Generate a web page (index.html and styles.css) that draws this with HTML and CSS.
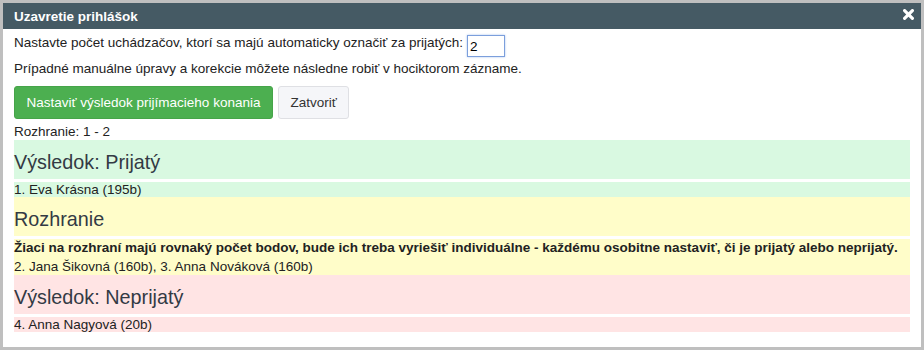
FILE: index.html
```html
<!DOCTYPE html>
<html lang="sk">
<head>
    <meta charset="UTF-8">
    <title>Uzavretie prihlášok</title>
    <link rel="stylesheet" href="styles.css">
</head>
<body>
    <div class="dialog">
        <div class="dialog-title">
            <span>Uzavretie prihlášok</span>
            <button class="close" title="Zavrieť">
                <svg width="11" height="11" viewBox="0 0 11 11">
                    <path d="M1.6 1.6 L9.4 9.4 M9.4 1.6 L1.6 9.4" stroke="#fff" stroke-width="3.2" stroke-linecap="round"/>
                </svg>
            </button>
        </div>

        <div class="dialog-body">
            <div class="count-row">
                <label for="count">Nastavte počet uchádzačov, ktorí sa majú automaticky označiť za prijatých:</label>
                <input type="text" id="count" value="2">
            </div>
            <p class="hint">Prípadné manuálne úpravy a korekcie môžete následne robiť v hociktorom zázname.</p>

            <div class="actions">
                <button class="btn btn-success">Nastaviť výsledok prijímacieho konania</button>
                <button class="btn btn-default">Zatvoriť</button>
            </div>

            <p class="range">Rozhranie: 1 - 2</p>

            <!-- Prijatí -->
            <div class="result accepted">
                <h3>Výsledok: Prijatý</h3>
                <div class="list">1. Eva Krásna (195b)</div>
            </div>

            <!-- Rozhranie -->
            <div class="result borderline">
                <h3>Rozhranie</h3>
                <div class="list">
                    <strong class="note">Žiaci na rozhraní majú rovnaký počet bodov, bude ich treba vyriešiť individuálne - každému osobitne nastaviť, či je prijatý alebo neprijatý.</strong>
                    <span class="names">2. Jana Šikovná (160b), 3. Anna Nováková (160b)</span>
                </div>
            </div>

            <!-- Neprijatí -->
            <div class="result rejected">
                <h3>Výsledok: Neprijatý</h3>
                <div class="list">4. Anna Nagyová (20b)</div>
            </div>
        </div>
    </div>
</body>
</html>
```

FILE: styles.css
```css
* {
    margin: 0;
    padding: 0;
    box-sizing: border-box;
}

body {
    font-family: 'Liberation Sans', Arial, sans-serif;
    font-size: 13.5px;
    color: #222;
    background-color: #bfbfbf;
    padding: 3px;
}

.dialog {
    background: #fff;
    height: 344px;
}

.dialog-title {
    display: flex;
    align-items: center;
    justify-content: space-between;
    height: 26px;
    padding: 0 7px 0 11px;
    background-color: #455a64;
    color: #fff;
    font-weight: bold;
}

.close {
    display: flex;
    background: none;
    border: none;
    padding: 0;
    margin-top: -4px;
    cursor: pointer;
}

.dialog-body {
    padding: 5px 11px 0;
}

.count-row {
    display: flex;
    align-items: flex-start;
    line-height: 18px;
}

.count-row label {
    margin-right: 4px;
}

.count-row input {
    width: 38px;
    height: 22px;
    margin-top: 1px;
    padding: 0 2px;
    font: inherit;
    color: #000;
    border: 1px solid #7c9fdc;
    box-shadow: 0 0 2px #a9c4f0;
    outline: none;
}

.hint {
    margin-top: 3px;
    line-height: 18px;
}

.actions {
    display: flex;
    gap: 5px;
    margin-top: 8px;
}

.btn {
    height: 33px;
    padding: 0 11.5px;
    font: inherit;
    border-radius: 3px;
    cursor: pointer;
}

.btn-success {
    background-color: #4caf50;
    border: 1px solid #46a449;
    color: #fff;
}

.btn-default {
    background-color: #f5f6f9;
    border: 1px solid #dfe0e4;
    color: #333;
}

.range {
    margin-top: 4px;
    line-height: 17px;
}

.result h3 {
    font-size: 19.8px;
    font-weight: normal;
    line-height: 22px;
    padding: 11px 0 6px;
    margin-bottom: 3px;
    color: #333a44;
}

.list {
    line-height: 15px;
}

.accepted h3,
.accepted .list {
    background-color: #d9f9e1;
}

.borderline h3,
.borderline .list {
    background-color: #fffdc9;
}

.rejected h3,
.rejected .list {
    background-color: #ffe4e4;
}

.note {
    display: block;
    line-height: 18px;
}

.names {
    display: block;
    padding: 2px 0 1px;
}
```
